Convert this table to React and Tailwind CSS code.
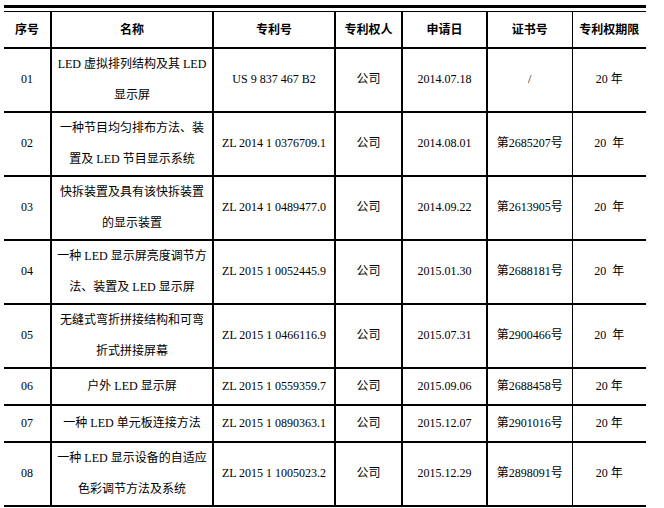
import React from 'react';

const rows = [
  { no: '01', name: ['LED 虚拟排列结构及其 LED', '显示屏'], patent: 'US 9 837 467 B2', date: '2014.07.18', cert: '/', term: '20 年', h: 'h-[64px]' },
  { no: '02', name: ['一种节目均匀排布方法、装', '置及 LED 节目显示系统'], patent: 'ZL 2014 1 0376709.1', date: '2014.08.01', cert: '第2685207号', term: '20\u00a0\u00a0年', h: 'h-[64px]' },
  { no: '03', name: ['快拆装置及具有该快拆装置', '的显示装置'], patent: 'ZL 2014 1 0489477.0', date: '2014.09.22', cert: '第2613905号', term: '20\u00a0\u00a0年', h: 'h-[64px]' },
  { no: '04', name: ['一种 LED 显示屏亮度调节方', '法、装置及 LED 显示屏'], patent: 'ZL 2015 1 0052445.9', date: '2015.01.30', cert: '第2688181号', term: '20\u00a0\u00a0年', h: 'h-[64px]' },
  { no: '05', name: ['无缝式弯折拼接结构和可弯', '折式拼接屏幕'], patent: 'ZL 2015 1 0466116.9', date: '2015.07.31', cert: '第2900466号', term: '20\u00a0\u00a0年', h: 'h-[64px]' },
  { no: '06', name: ['户外 LED 显示屏'], patent: 'ZL 2015 1 0559359.7', date: '2015.09.06', cert: '第2688458号', term: '20 年', h: 'h-[37px]' },
  { no: '07', name: ['一种 LED 单元板连接方法'], patent: 'ZL 2015 1 0890363.1', date: '2015.12.07', cert: '第2901016号', term: '20 年', h: 'h-[37px]' },
  { no: '08', name: ['一种 LED 显示设备的自适应', '色彩调节方法及系统'], patent: 'ZL 2015 1 1005023.2', date: '2015.12.29', cert: '第2898091号', term: '20 年', h: 'h-[63px]' },
];

const headers = ['序号', '名称', '专利号', '专利权人', '申请日', '证书号', '专利权期限'];

const cellBorder = (i) =>
  i < 5 ? 'border-r-2 border-black' : i === 5 ? 'border-r border-black' : '';

export default function App() {
  return (
    <div className="w-[664px] h-[508px] bg-white text-black pt-[5px] pl-[4px]" style={{ fontFamily: '"Liberation Serif", "Noto Sans CJK SC", serif' }}>
      <div className="w-[642px] h-[3px] bg-black" />
      <table className="table-fixed border-collapse w-[642px] mt-[3px] text-[12px]">
        <colgroup>
          <col className="w-[47px]" />
          <col className="w-[162px]" />
          <col className="w-[122px]" />
          <col className="w-[67px]" />
          <col className="w-[85px]" />
          <col className="w-[85px]" />
          <col className="w-[74px]" />
        </colgroup>
        <thead>
          <tr className="h-[36px] border-t border-black">
            {headers.map((t, i) => (
              <th
                key={t}
                className={`p-0 text-center font-bold text-[12px] border-b-2 border-black ${cellBorder(i)}`}
                style={{ fontFamily: '"Noto Sans CJK SC", sans-serif' }}
              >
                {t}
              </th>
            ))}
          </tr>
        </thead>
        <tbody>
          {rows.map((r) => (
            <tr key={r.no} className={r.h}>
              {[
                r.no,
                r.name,
                r.patent,
                '公司',
                r.date,
                r.cert,
                r.term,
              ].map((v, i) => (
                <td
                  key={i}
                  className={`p-0 text-center align-middle whitespace-nowrap leading-[31px] border-b-2 border-black ${cellBorder(i)}`}
                >
                  {Array.isArray(v)
                    ? v.map((line) => <div key={line}>{line}</div>)
                    : v}
                </td>
              ))}
            </tr>
          ))}
        </tbody>
      </table>
    </div>
  );
}
